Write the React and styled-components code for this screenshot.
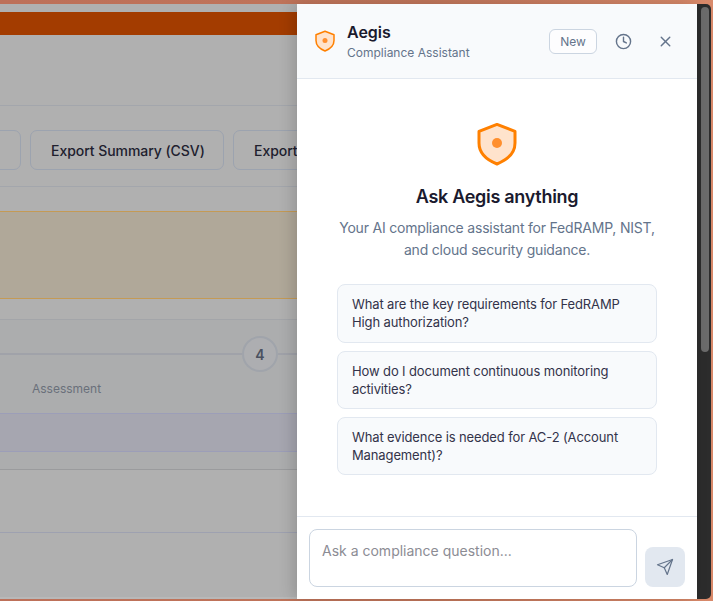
import React from 'react';
import styled, { createGlobalStyle } from 'styled-components';
import { Clock, X } from 'lucide-react';

const Global = createGlobalStyle`
  html, body { margin: 0; padding: 0; height: 100%; overflow: hidden; }
  body { font-family: 'Inter', 'Liberation Sans', sans-serif; }
`;

const Frame = styled.div`
  width: 713px;
  height: 601px;
  box-sizing: border-box;
  padding: 4px 2px 2px 0;
  display: flex;
  background: linear-gradient(90deg, #bd7059 0%, #c0755a 60%, #d8896a 100%);
  overflow: hidden;
`;

const Backdrop = styled.div`
  flex: 0 0 297px;
  width: 297px;
  box-sizing: border-box;
  background: #b0b0b0;
  border-bottom: 2px solid #b8b8b8;
  overflow: hidden;
  display: flex;
  flex-direction: column;
  align-items: flex-start;
`;

const Banner = styled.div`
  width: 100%;
  height: 23px;
  margin-top: 8px;
  flex: none;
  background: #a33c00;
`;

const Rule = styled.div`
  width: 100%;
  flex: none;
  height: 1px;
  margin-top: ${p => p.$top}px;
  background: ${p => p.$color || '#a3a6ac'};
`;

const Actions = styled.div`
  display: flex;
  gap: 9px;
  margin: 24px 0 0 -65px;
  flex: none;
`;

const ActionButton = styled.div`
  flex: none;
  width: ${p => p.$width}px;
  height: 40px;
  box-sizing: border-box;
  border: 1px solid #9ca3af;
  border-radius: 7px;
  display: flex;
  align-items: center;
  padding-left: 20px;
  font-size: 14px;
  font-weight: 500;
  letter-spacing: -0.05px;
  color: #20202e;
  white-space: nowrap;
`;

const Warning = styled.div`
  width: 100%;
  flex: none;
  height: 88px;
  box-sizing: border-box;
  margin-top: 24px;
  background: #b0a899;
  border-top: 1px solid #c49a55;
  border-bottom: 1px solid #c49a55;
`;

const StepSection = styled.div`
  width: 100%;
  flex: none;
  height: 151px;
  box-sizing: border-box;
  margin-top: 20px;
  background: #acadae;
  border-top: 1px solid #a3a5a9;
  border-bottom: 1px solid #9a9b9d;
  display: flex;
  flex-direction: column;
`;

const StepTrack = styled.div`
  flex: none;
  height: 36px;
  margin-top: 16px;
  display: flex;
  align-items: center;
`;

const StepLine = styled.div`
  height: 2px;
  background: #a0a2a9;
  flex: ${p => (p.$grow ? 1 : 'none')};
  width: ${p => p.$width || 0}px;
`;

const StepDot = styled.div`
  flex: none;
  width: 36px;
  height: 36px;
  box-sizing: border-box;
  border: 2px solid #a0a4ab;
  border-radius: 50%;
  background: #adaeb1;
  display: flex;
  align-items: center;
  justify-content: center;
  font-size: 14px;
  font-weight: 600;
  color: #4a5160;
`;

const StepLabel = styled.div`
  margin: 8px 0 0 32px;
  font-size: 12px;
  line-height: 18px;
  color: #6a707b;
`;

const ActiveRow = styled.div`
  flex: none;
  height: 39px;
  box-sizing: border-box;
  margin-top: 15px;
  background: #a6a6b0;
  border-top: 1px solid #9c9eb8;
  border-bottom: 1px solid #9c9eb8;
`;

const Panel = styled.aside`
  flex: 0 0 400px;
  width: 400px;
  background: #ffffff;
  box-shadow: -4px 0 14px rgba(0, 0, 0, 0.16);
  display: flex;
  flex-direction: column;
  position: relative;
`;

const Header = styled.header`
  flex: none;
  height: 75px;
  box-sizing: border-box;
  padding: 0 23px 0 16px;
  background: #f8fafc;
  border-bottom: 1px solid #e2e8f0;
  display: flex;
  align-items: center;
`;

const Brand = styled.div`
  flex: 1;
  display: flex;
  align-items: center;
  gap: 10px;
`;

const BrandText = styled.div`
  display: flex;
  flex-direction: column;
`;

const BrandName = styled.div`
  font-size: 16px;
  line-height: 22px;
  font-weight: 600;
  color: #1a1a2e;
`;

const BrandSub = styled.div`
  margin-top: 1px;
  font-size: 12px;
  line-height: 18px;
  color: #64748b;
`;

const NewButton = styled.div`
  width: 48px;
  height: 25px;
  box-sizing: border-box;
  border: 1px solid #cbd5e1;
  border-radius: 6px;
  background: #fdfdfe;
  display: flex;
  align-items: center;
  justify-content: center;
  font-size: 12px;
  color: #64748b;
`;

const IconButton = styled.div`
  width: 18px;
  height: 18px;
  margin-left: ${p => p.$left}px;
  display: flex;
  align-items: center;
  justify-content: center;
  color: #64748b;
`;

const Body = styled.main`
  flex: 1;
  min-height: 0;
  display: flex;
  flex-direction: column;
  align-items: center;
  padding-top: 41px;
`;

const Title = styled.h2`
  margin: 16px 0 0;
  font-size: 18px;
  line-height: 26px;
  font-weight: 600;
  letter-spacing: -0.3px;
  color: #1a1a2e;
`;

const Intro = styled.p`
  margin: 7px 0 0;
  width: 340px;
  text-align: center;
  font-size: 14px;
  line-height: 22.4px;
  letter-spacing: -0.2px;
  color: #64748b;
`;

const Suggestions = styled.div`
  margin-top: 22.4px;
  width: 320px;
  display: flex;
  flex-direction: column;
  gap: 8px;
`;

const Suggestion = styled.div`
  box-sizing: border-box;
  padding: 10px 14px;
  background: #f8fafc;
  border: 1px solid #e2e8f0;
  border-radius: 8px;
  font-size: 13px;
  line-height: 18.2px;
  letter-spacing: -0.12px;
  color: #33334a;
`;

const Composer = styled.footer`
  flex: none;
  height: 83px;
  box-sizing: border-box;
  padding: 12px 12px 0;
  border-top: 1px solid #e2e8f0;
  display: flex;
  align-items: flex-end;
  gap: 8px;
`;

const Input = styled.div`
  flex: 1;
  align-self: flex-start;
  height: 58px;
  box-sizing: border-box;
  padding: 11px 12px;
  border: 1px solid #cbd5e1;
  border-radius: 8px;
  font-size: 14px;
  line-height: 20px;
  color: #8c8c94;
`;

const SendButton = styled.div`
  flex: none;
  width: 40px;
  height: 40px;
  margin-bottom: 12px;
  border-radius: 8px;
  background: #e2e8f0;
  display: flex;
  align-items: center;
  justify-content: center;
  color: #64748b;
`;

const Scrollbar = styled.div`
  flex: 0 0 14px;
  width: 14px;
  box-sizing: border-box;
  padding: 3px 2px 0 4px;
  background: #2c2c2c;
  border-radius: 0 5px 5px 0;
`;

const Thumb = styled.div`
  height: 345px;
  border-radius: 4px;
  background: #6b6b6b;
`;

const Shield = ({ size }) => (
  <svg width={size} height={size} viewBox="0 0 24 24" fill="none">
    <path
      d="M12 2.200 21 5.700V11.500C21 16.500 17 20 12 22 7 20 3 16.500 3 11.500V5.700Z"
      fill="#ffe3cc"
      stroke="#ff8000"
      strokeWidth="1.500"
      strokeLinejoin="round"
    />
    <circle cx="12" cy="11.500" r="2.500" fill="#ff8f2e" />
  </svg>
);

const SendIcon = () => (
  <svg width="18" height="18" viewBox="0 0 24 24" fill="none" stroke="currentColor" strokeWidth="1.600" strokeLinejoin="round" strokeLinecap="round">
    <path d="M22 2 15 22 11 13 2 9Z" />
    <path d="M22 2 11 13" />
  </svg>
);

const questions = [
  'What are the key requirements for FedRAMP High authorization?',
  'How do I document continuous monitoring activities?',
  'What evidence is needed for AC-2 (Account Management)?',
];

export default function App() {
  return (
    <Frame>
      <Global />
      <Backdrop>
        <Banner />
        <Rule $top={70} />
        <Actions>
          <ActionButton $width={86}>Export</ActionButton>
          <ActionButton $width={194}>Export Summary (CSV)</ActionButton>
          <ActionButton $width={120}>Export Report</ActionButton>
        </Actions>
        <Rule $top={16} />
        <Warning />
        <StepSection>
          <StepTrack>
            <StepLine $width={242} />
            <StepDot>4</StepDot>
            <StepLine $grow />
          </StepTrack>
          <StepLabel>Assessment</StepLabel>
          <ActiveRow />
        </StepSection>
        <Rule $top={62} $color="#9ea1b0" />
      </Backdrop>
      <Panel>
        <Header>
          <Brand>
            <Shield size={24} />
            <BrandText>
              <BrandName>Aegis</BrandName>
              <BrandSub>Compliance Assistant</BrandSub>
            </BrandText>
          </Brand>
          <NewButton>New</NewButton>
          <IconButton $left={17}><Clock size={17} /></IconButton>
          <IconButton $left={24}><X size={17} /></IconButton>
        </Header>
        <Body>
          <Shield size={48} />
          <Title>Ask Aegis anything</Title>
          <Intro>Your AI compliance assistant for FedRAMP, NIST, and cloud security guidance.</Intro>
          <Suggestions>
            {questions.map(q => <Suggestion key={q}>{q}</Suggestion>)}
          </Suggestions>
        </Body>
        <Composer>
          <Input>Ask a compliance question...</Input>
          <SendButton><SendIcon /></SendButton>
        </Composer>
      </Panel>
      <Scrollbar><Thumb /></Scrollbar>
    </Frame>
  );
}
